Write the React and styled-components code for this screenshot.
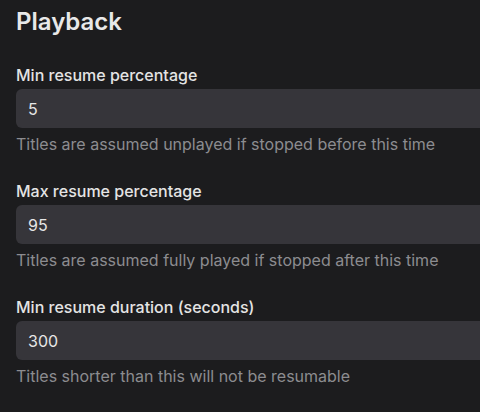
import React from 'react';
import styled, { createGlobalStyle } from 'styled-components';

const GlobalStyle = createGlobalStyle`
  html, body {
    margin: 0;
    padding: 0;
    background: #1c1c1e;
    overflow: hidden;
  }
  body {
    font-family: Inter, "Noto Sans", sans-serif;
    color: #e6e6e6;
  }
`;

const Page = styled.div`
  width: 560px;
  height: 412px;
  padding: 6px 16px 0;
`;

const Heading = styled.h2`
  margin: 0 0 27px;
  font-size: 24px;
  line-height: 32px;
  font-weight: 600;
  color: #e8e8e8;
`;

const Field = styled.div`
  display: flex;
  flex-direction: column;
  margin-bottom: 27px;
`;

const Label = styled.label`
  font-size: 16px;
  line-height: 20px;
  font-weight: 500;
  color: #e4e4e4;
  margin-bottom: 4px;
`;

const Input = styled.input`
  box-sizing: border-box;
  width: 100%;
  height: 39px;
  padding: 0 12px;
  border: none;
  border-radius: 6px;
  background: #36353a;
  color: #e6e6e6;
  font-family: inherit;
  font-size: 16px;
  outline: none;
`;

const Hint = styled.div`
  margin-top: 6px;
  font-size: 16px;
  line-height: 20px;
  color: #8c8c90;
`;

const fields = [
  { label: 'Min resume percentage', value: '5', hint: 'Titles are assumed unplayed if stopped before this time' },
  { label: 'Max resume percentage', value: '95', hint: 'Titles are assumed fully played if stopped after this time' },
  { label: 'Min resume duration (seconds)', value: '300', hint: 'Titles shorter than this will not be resumable' },
];

export default function App() {
  return (
    <>
      <GlobalStyle />
      <Page>
        <Heading>Playback</Heading>
        {fields.map((f) => (
          <Field key={f.label}>
            <Label>{f.label}</Label>
            <Input type="text" defaultValue={f.value} />
            <Hint>{f.hint}</Hint>
          </Field>
        ))}
      </Page>
    </>
  );
}
